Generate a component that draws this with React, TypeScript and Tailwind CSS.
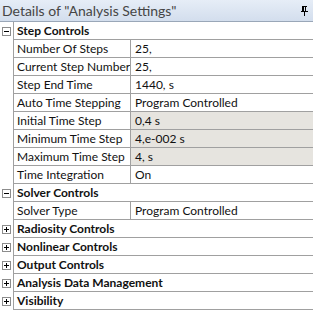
import type { ReactNode } from 'react';

type Row =
  | { kind: 'cat'; label: string; open: boolean }
  | { kind: 'prop'; label: string; value: string; shaded?: boolean };

const rows: Row[] = [
  { kind: 'cat', label: 'Step Controls', open: true },
  { kind: 'prop', label: 'Number Of Steps', value: '25,' },
  { kind: 'prop', label: 'Current Step Number', value: '25,' },
  { kind: 'prop', label: 'Step End Time', value: '1440, s' },
  { kind: 'prop', label: 'Auto Time Stepping', value: 'Program Controlled' },
  { kind: 'prop', label: 'Initial Time Step', value: '0,4 s', shaded: true },
  { kind: 'prop', label: 'Minimum Time Step', value: '4,e-002 s', shaded: true },
  { kind: 'prop', label: 'Maximum Time Step', value: '4, s', shaded: true },
  { kind: 'prop', label: 'Time Integration', value: 'On' },
  { kind: 'cat', label: 'Solver Controls', open: true },
  { kind: 'prop', label: 'Solver Type', value: 'Program Controlled' },
  { kind: 'cat', label: 'Radiosity Controls', open: false },
  { kind: 'cat', label: 'Nonlinear Controls', open: false },
  { kind: 'cat', label: 'Output Controls', open: false },
  { kind: 'cat', label: 'Analysis Data Management', open: false },
  { kind: 'cat', label: 'Visibility', open: false },
];

function Toggle({ open }: { open: boolean }) {
  return (
    <svg width="9" height="9" viewBox="0 0 9 9" className="block">
      <rect x="0.5" y="0.5" width="8" height="8" fill="#fff" stroke="#8c8c8c" />
      <path d="M2 4.5h5" stroke="#000" />
      {!open && <path d="M4.5 2v5" stroke="#000" />}
    </svg>
  );
}

function Pin() {
  return (
    <svg width="7" height="10" viewBox="0 0 7 10" className="block">
      <path d="M1 0.5h5M1.5 0.5v5M4.5 0.5v5M0 5.5h7M3.5 6v4" stroke="#000" strokeWidth="1" />
      <path d="M2.5 1v4" stroke="#000" />
    </svg>
  );
}

function Line({ children, gutter }: { children: ReactNode; gutter?: ReactNode }) {
  return (
    <div className="flex h-[18px]">
      <div className="flex w-[14px] shrink-0 items-center justify-center border-r border-[#a0a0a0] bg-white pr-[1px]">
        {gutter}
      </div>
      <div className="flex min-w-0 flex-1 items-center border-b border-[#a0a0a0]">{children}</div>
    </div>
  );
}

export default function App() {
  return (
    <div
      className="h-[311px] w-[313px] overflow-hidden bg-white text-[12px] leading-[17px] text-[#111]"
      style={{ fontFamily: 'Lato, "Noto Sans", sans-serif' }}
    >
      <div className="flex h-[22px] items-center justify-between border-b border-[#9aa7b8] bg-gradient-to-b from-[#e6edf7] to-[#d3deed] pl-[2px] pr-[5px]">
        <span className="text-[14px] text-[#454545]">Details of "Analysis Settings"</span>
        <Pin />
      </div>
      {rows.map((r) =>
        r.kind === 'cat' ? (
          <Line key={r.label} gutter={<Toggle open={r.open} />}>
            <span className="pl-[3px] font-bold">{r.label}</span>
          </Line>
        ) : (
          <Line key={r.label}>
            <span className="h-full w-[117px] shrink-0 overflow-hidden whitespace-nowrap border-r border-[#a0a0a0] pl-[3px]">{r.label}</span>
            <span className={`h-full flex-1 overflow-hidden whitespace-nowrap pl-[4px] ${r.shaded ? 'bg-[#e6e4df]' : ''}`}>{r.value}</span>
          </Line>
        ),
      )}
    </div>
  );
}
